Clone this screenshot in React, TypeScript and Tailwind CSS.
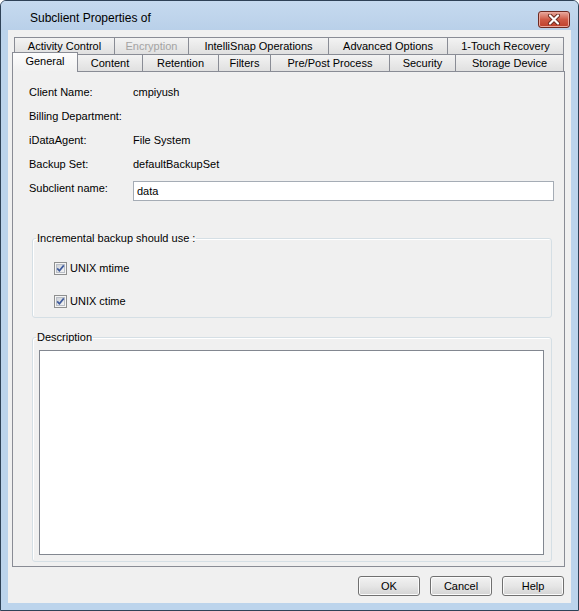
const font = "[font-family:'Liberation_Sans',Arial,sans-serif]";

const backTabs = [
  { label: "Activity Control", w: "w-[101px]" },
  { label: "Encryption", w: "w-[75px]", disabled: true },
  { label: "IntelliSnap Operations", w: "w-[141px]" },
  { label: "Advanced Options", w: "w-[120px]" },
  { label: "1-Touch Recovery", w: "w-[117px]" },
];

const frontTabs = [
  { label: "Content", w: "w-[66px]" },
  { label: "Retention", w: "w-[77px]" },
  { label: "Filters", w: "w-[53px]" },
  { label: "Pre/Post Process", w: "w-[120px]" },
  { label: "Security", w: "w-[67px]" },
  { label: "Storage Device", w: "w-[109px]" },
];

const info = [
  { label: "Client Name:", value: "cmpiyush" },
  { label: "Billing Department:", value: "" },
  { label: "iDataAgent:", value: "File System" },
  { label: "Backup Set:", value: "defaultBackupSet" },
];

const CheckBox = () => (
  <svg width="13" height="13" viewBox="0 0 13 13">
    <defs>
      <linearGradient id="cbInner" x1="0" y1="0" x2="1" y2="1">
        <stop offset="0" stopColor="#cbcfd5" />
        <stop offset="1" stopColor="#f6f6f6" />
      </linearGradient>
    </defs>
    <rect x="0.5" y="0.5" width="12" height="12" fill="#f4f4f4" stroke="#8e8f8f" />
    <rect x="2.5" y="2.5" width="8" height="8" fill="url(#cbInner)" stroke="#b9bec6" />
    <path d="M3.2 6.4 L5.4 8.8 L9.8 3.4" stroke="#3f5b9c" strokeWidth="1.7" fill="none" />
  </svg>
);

const Button = ({ label }: { label: string }) => (
  <div className="w-[62px] h-[20px] flex items-center justify-center rounded-[3px] border border-[#707070] bg-linear-to-b from-[#f2f2f2] via-[#e6e6e6] to-[#d3d3d3] shadow-[inset_0_0_0_1px_#fbfbfb] text-[11px] text-black">
    {label}
  </div>
);

export default function App() {
  return (
    <div className={`${font} w-[579px] h-[611px] flex flex-col border border-[#2f4257] rounded-t-[6px] bg-[#bcd4ec] overflow-hidden text-black`}>
      {/* title bar */}
      <div className="h-[29px] flex items-start bg-linear-to-b from-[#c6daef] to-[#b9d0e9]">
        <span className="pl-[29px] pt-[10px] text-[12px] leading-[15px]">Subclient Properties of</span>
        <div className="ml-auto mr-[8px] mt-[10px] w-[32px] h-[17px] rounded-[3px] border border-[#6d2a22] bg-linear-to-b from-[#e6a89d] via-[#cf5a46] to-[#c0402b] flex items-center justify-center shadow-[inset_0_0_0_1px_#eca89c]">
          <svg width="14" height="11" viewBox="0 0 14 11">
            <path d="M3 1.5 L11 9.5 M11 1.5 L3 9.5" stroke="#6b2a20" strokeWidth="4" strokeLinecap="round" />
            <path d="M3 1.5 L11 9.5 M11 1.5 L3 9.5" stroke="#ffffff" strokeWidth="2.2" strokeLinecap="round" />
          </svg>
        </div>
      </div>

      {/* body */}
      <div className="flex-1 px-[7px] pb-[7px] flex flex-col">
        <div className="flex-1 bg-[#f0f0f0] flex flex-col text-[11px] leading-[13px]">
          {/* back tab row */}
          <div className="mt-[7px] ml-[6px] h-[17px] flex">
            {backTabs.map((t, i) => (
              <div
                key={t.label}
                className={`${t.w} ${i > 0 ? "-ml-px" : ""} h-[17px] flex items-center justify-center border-l border-t border-r border-[#898c95] bg-linear-to-b from-[#f3f3f3] to-[#e0e0e0] ${t.disabled ? "text-[#a3a3a3]" : ""}`}
              >
                {t.label}
              </div>
            ))}
          </div>
          {/* front tab row */}
          <div className="ml-[4px] h-[17px] flex items-end">
            <div className="relative z-10 w-[66px] h-[20px] -mb-px pb-[2px] flex items-center justify-center border-l border-t border-r border-[#898c95] bg-linear-to-b from-[#fdfdfd] to-[#f0f0f0]">
              General
            </div>
            {frontTabs.map((t) => (
              <div
                key={t.label}
                className={`${t.w} -ml-px h-[17px] flex items-center justify-center border-l border-t border-r border-[#898c95] bg-linear-to-b from-[#f3f3f3] to-[#e0e0e0]`}
              >
                {t.label}
              </div>
            ))}
          </div>

          {/* panel */}
          <div className="ml-[4px] w-[553px] h-[496px] border border-[#898c95] bg-[#f0f0f0] flex flex-col pt-[8px]">
            {info.map((r) => (
              <div key={r.label} className="h-[24px] flex items-center pl-[16px]">
                <span className="w-[104px]">{r.label}</span>
                <span>{r.value}</span>
              </div>
            ))}
            <div className="mt-[5px] flex items-start pl-[16px]">
              <span className="w-[104px] pt-[1px]">Subclient name:</span>
              <div className="w-[421px] h-[20px] border border-[#a5acb5] bg-white flex items-center pl-[3px]">data</div>
            </div>

            <fieldset className="mt-[31px] ml-[19px] w-[520px] h-[86px] border border-[#d5dfe5] rounded-[3px] shadow-[inset_1px_1px_0_#ffffff]">
              <legend className="ml-[3px] px-[1px] leading-[13px]">Incremental backup should use :</legend>
              <div className="pt-[17px] pl-[21px] flex flex-col gap-[20px]">
                <div className="h-[13px] flex items-center gap-[3px]">
                  <CheckBox />
                  <span>UNIX mtime</span>
                </div>
                <div className="h-[13px] flex items-center gap-[3px]">
                  <CheckBox />
                  <span>UNIX ctime</span>
                </div>
              </div>
            </fieldset>

            <fieldset className="mt-[13px] ml-[19px] w-[520px] h-[231px] border border-[#d5dfe5] rounded-[3px] shadow-[inset_1px_1px_0_#ffffff]">
              <legend className="ml-[3px] px-[1px] leading-[13px]">Description</legend>
              <div className="pt-[6px] pl-[6px]">
                <div className="w-[505px] h-[205px] border border-[#828790] bg-white" />
              </div>
            </fieldset>
          </div>

          {/* buttons */}
          <div className="mt-[9px] pr-[7px] flex justify-end gap-[10px]">
            <Button label="OK" />
            <Button label="Cancel" />
            <Button label="Help" />
          </div>
        </div>
      </div>
    </div>
  );
}
